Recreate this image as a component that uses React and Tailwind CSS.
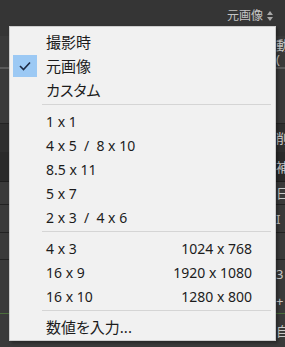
import React from "react";

const sans = { fontFamily: '"Noto Sans", "Noto Sans CJK JP", sans-serif' };

function Separator() {
  return (
    <div className="h-[7px] pt-[2px] pl-[32px] pr-[4px]">
      <div className="h-px bg-[#d5d5d5]" />
    </div>
  );
}

function Item({ label, right, checked, jp }) {
  return (
    <div className="relative flex items-center h-[24px] pl-[36px] pr-[23px] text-[14px] text-[#1c1c1c]">
      {checked && (
        <div className="absolute left-[3px] top-[1px] w-[24px] h-[22px] bg-[#9cc9f4] flex items-center justify-center">
          <svg width="12" height="10" viewBox="0 0 12 10">
            <path d="M1 5 L4.5 8.5 L11 1.5" fill="none" stroke="#1d2a44" strokeWidth="1.6" />
          </svg>
        </div>
      )}
      <span className={`flex-1 whitespace-pre ${jp ? "text-[15px] [font-feature-settings:'palt']" : ""}`}>{label}</span>
      {right && <span>{right}</span>}
    </div>
  );
}

// background panel rows visible around the menu
const bgRows = [
  { h: 36, bg: "bg-[#353535]", text: "" },
  { h: 33, bg: "bg-[#3a3a3a]", text: "動\n(", border: "border-b-2 border-[#5a5a5a]" },
  { h: 55, bg: "bg-[#3a3a3a]", text: "", border: "border-b border-[#232323]" },
  { h: 28, bg: "bg-[#2f2f2f]", text: "削", border: "" },
  { h: 30, bg: "bg-[#2a2a2a]", text: "補正", border: "border-b border-[#1e1e1e]" },
  { h: 23, bg: "bg-[#3a3a3a]", text: "日", border: "border-b border-[#222]" },
  { h: 28, bg: "bg-[#3a3a3a]", text: "I", border: "border-b border-[#222]" },
  { h: 27, bg: "bg-[#3a3a3a]", text: "", border: "border-b border-[#222]" },
  { h: 28, bg: "bg-[#3a3a3a]", text: "3", border: "" },
  { h: 26, bg: "bg-[#3a3a3a]", text: "+", border: "border-b border-[#4c6e3c]" },
  { h: 33, bg: "bg-[#3a3a3a]", text: "自動補正", border: "" },
];

export default function App() {
  return (
    <div className="relative w-[285px] h-[347px] overflow-hidden bg-[#383838]" style={sans}>
      {/* background panel */}
      <div className="flex flex-col">
        {bgRows.map((r, i) => (
          <div
            key={i}
            className={`${r.bg} ${r.border || ""} box-border overflow-hidden whitespace-pre text-[13px] leading-[14px] text-[#c9c9c9] pl-[276px] flex items-center`}
            style={{ height: r.h }}
          >
            {r.text}
          </div>
        ))}
      </div>

      {/* header value */}
      <div className="absolute right-[12px] top-[7px] flex items-center gap-[4px] text-[12px] text-[#c4c4c4]">
        <span>元画像</span>
        <svg width="6" height="10" viewBox="0 0 6 10">
          <path d="M0 4 L3 0 L6 4 Z M0 6 L3 10 L6 6 Z" fill="#a8a8a8" />
        </svg>
      </div>

      {/* dropdown menu */}
      <div className="absolute left-[9px] top-[26px] w-[267px] bg-[#f1f1f1] border border-[#cdcdcd] pt-[3px] pb-[1px] shadow-[2px_2px_3px_rgba(0,0,0,0.35)]">
        <Item label="撮影時" jp />
        <Item label="元画像" jp checked />
        <Item label="カスタム" jp />
        <Separator />
        <Item label="1 x 1" />
        <Item label="4 x 5  /  8 x 10" />
        <Item label="8.5 x 11" />
        <Item label="5 x 7" />
        <Item label="2 x 3  /  4 x 6" />
        <Separator />
        <Item label="4 x 3" right="1024 x 768" />
        <Item label="16 x 9" right="1920 x 1080" />
        <Item label="16 x 10" right="1280 x 800" />
        <Separator />
        <Item label="数値を入力..." jp />
      </div>
    </div>
  );
}
